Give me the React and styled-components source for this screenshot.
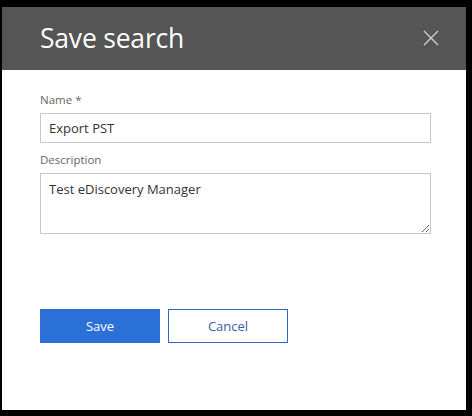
import React from 'react';
import styled, { createGlobalStyle } from 'styled-components';

const GlobalStyle = createGlobalStyle`
    html, body {
        margin: 0;
        padding: 0;
        background-color: #000000;
    }
    body {
        font-family: "Open Sans", "Liberation Sans", sans-serif;
    }
`;

const Frame = styled.div`
    width: 472px;
    height: 416px;
    padding: 7px 6px 6px 2px;
    box-sizing: border-box;
    background-color: #000000;
`;

const Dialog = styled.div`
    display: flex;
    flex-direction: column;
    width: 464px;
    height: 403px;
    background-color: #ffffff;
`;

const Header = styled.div`
    display: flex;
    align-items: center;
    justify-content: space-between;
    height: 63px;
    padding: 0 27px 2px 38px;
    box-sizing: border-box;
    background-color: #555555;
`;

const Title = styled.h1`
    margin: 0;
    font-size: 26.5px;
    font-weight: 400;
    color: #ffffff;
    letter-spacing: -0.2px;
`;

const CloseButton = styled.button`
    display: flex;
    padding: 0;
    border: none;
    background: none;
    cursor: pointer;
`;

const Body = styled.div`
    display: flex;
    flex-direction: column;
    padding: 22px 35px 0 38px;
`;

const Field = styled.div`
    display: flex;
    flex-direction: column;
    gap: 5px;
    margin-bottom: ${(props) => props.spacing || '0'};
`;

const Label = styled.label`
    font-size: 11.5px;
    line-height: 16px;
    color: #666666;
`;

const TextInput = styled.input`
    height: 30px;
    padding: 0 8px;
    box-sizing: border-box;
    font-family: inherit;
    font-size: 13px;
    color: #333333;
    border: 1px solid #c8c8c8;
    outline: none;
`;

const TextArea = styled.textarea`
    height: 61px;
    padding: 6px 8px;
    box-sizing: border-box;
    font-family: inherit;
    font-size: 13px;
    color: #333333;
    border: 1px solid #c8c8c8;
    outline: none;
    resize: vertical;
`;

const Actions = styled.div`
    display: flex;
    gap: 8px;
    margin-top: 75px;
`;

const Button = styled.button`
    width: 120px;
    height: 34px;
    box-sizing: border-box;
    font-family: inherit;
    font-size: 13px;
    color: ${(props) => (props.primary ? '#ffffff' : '#3a5da8')};
    background-color: ${(props) => (props.primary ? '#2b70d6' : '#ffffff')};
    border: 1px solid ${(props) => (props.primary ? '#2b70d6' : '#2f66c4')};
    cursor: pointer;
`;

const CloseIcon = () => (
    <svg width="16" height="16" viewBox="0 0 16 16">
        <path d="M1 1L15 15M15 1L1 15" stroke="#cfcfcf" strokeWidth="1.4" fill="none" />
    </svg>
);

const App = () => {
    return (
        <>
            <GlobalStyle />
            <Frame>
                <Dialog>
                    <Header>
                        <Title>Save search</Title>
                        <CloseButton aria-label="Close">
                            <CloseIcon />
                        </CloseButton>
                    </Header>
                    <Body>
                        <Field spacing="9px">
                            <Label>Name *</Label>
                            <TextInput defaultValue="Export PST" />
                        </Field>
                        <Field>
                            <Label>Description</Label>
                            <TextArea defaultValue="Test eDiscovery Manager" />
                        </Field>
                        <Actions>
                            <Button primary>Save</Button>
                            <Button>Cancel</Button>
                        </Actions>
                    </Body>
                </Dialog>
            </Frame>
        </>
    );
};

export default App;
